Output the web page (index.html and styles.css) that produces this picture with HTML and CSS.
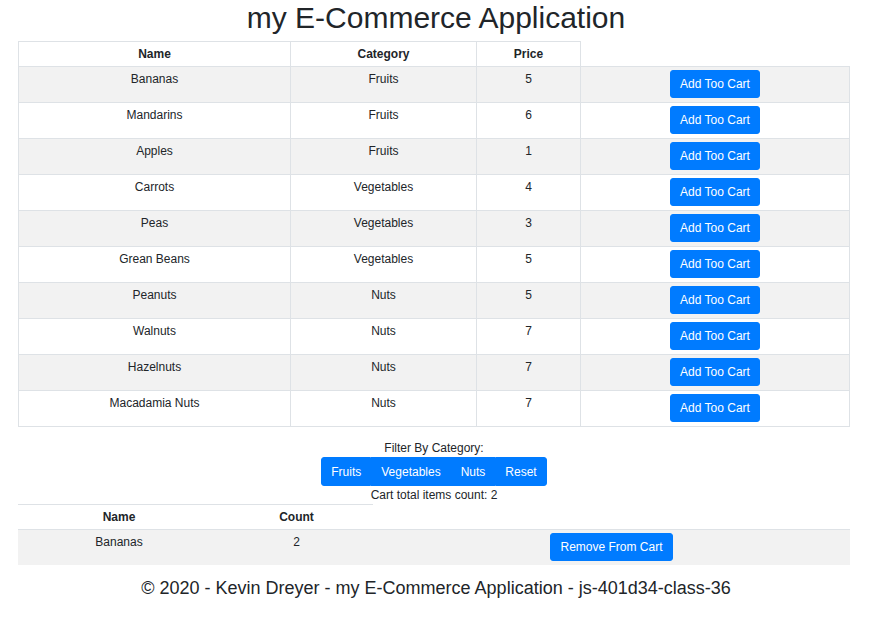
FILE: index.html
```html
<!DOCTYPE html>
<html lang="en">
<head>
<meta charset="utf-8">
<title>my E-Commerce Application</title>
<link rel="stylesheet" href="styles.css">
</head>
<body>
<div class="app">
  <h1 class="title">my E-Commerce Application</h1>
  <table class="tbl products">
    <colgroup>
      <col class="c-name"><col class="c-cat"><col class="c-price"><col>
    </colgroup>
    <thead>
      <tr><th>Name</th><th>Category</th><th>Price</th></tr>
    </thead>
    <tbody>
      <tr><td>Bananas</td><td>Fruits</td><td>5</td><td><button class="btn">Add Too Cart</button></td></tr>
      <tr><td>Mandarins</td><td>Fruits</td><td>6</td><td><button class="btn">Add Too Cart</button></td></tr>
      <tr><td>Apples</td><td>Fruits</td><td>1</td><td><button class="btn">Add Too Cart</button></td></tr>
      <tr><td>Carrots</td><td>Vegetables</td><td>4</td><td><button class="btn">Add Too Cart</button></td></tr>
      <tr><td>Peas</td><td>Vegetables</td><td>3</td><td><button class="btn">Add Too Cart</button></td></tr>
      <tr><td>Grean Beans</td><td>Vegetables</td><td>5</td><td><button class="btn">Add Too Cart</button></td></tr>
      <tr><td>Peanuts</td><td>Nuts</td><td>5</td><td><button class="btn">Add Too Cart</button></td></tr>
      <tr><td>Walnuts</td><td>Nuts</td><td>7</td><td><button class="btn">Add Too Cart</button></td></tr>
      <tr><td>Hazelnuts</td><td>Nuts</td><td>7</td><td><button class="btn">Add Too Cart</button></td></tr>
      <tr><td>Macadamia Nuts</td><td>Nuts</td><td>7</td><td><button class="btn">Add Too Cart</button></td></tr>
    </tbody>
  </table>

  <div class="filter">
    <div class="line">Filter By Category:</div>
    <div class="btn-group">
      <button class="btn">Fruits</button><button class="btn">Vegetables</button><button class="btn">Nuts</button><button class="btn">Reset</button>
    </div>
    <div class="line">Cart total items count: 2</div>
  </div>

  <table class="tbl cart">
    <colgroup>
      <col class="c-cname"><col class="c-count"><col>
    </colgroup>
    <thead>
      <tr><th>Name</th><th>Count</th></tr>
    </thead>
    <tbody>
      <tr><td>Bananas</td><td>2</td><td><button class="btn">Remove From Cart</button></td></tr>
    </tbody>
  </table>

  <h4 class="footer">© 2020 - Kevin Dreyer - my E-Commerce Application - js-401d34-class-36</h4>
</div>
</body>
</html>
```

FILE: styles.css
```css
* { box-sizing: border-box; }

html, body {
  margin: 0;
  padding: 0;
  background: #fff;
}

body {
  font-family: "Liberation Sans", Arial, Helvetica, sans-serif;
  font-size: 12px;
  line-height: 18px;
  color: #212529;
}

.app {
  padding: 0 22px 0 18px;
  text-align: center;
}

.title {
  margin: 0 0 5px;
  padding-left: 4px;
  font-size: 30px;
  line-height: 36px;
  font-weight: 400;
}

.tbl {
  width: 100%;
  border-collapse: collapse;
  table-layout: fixed;
  margin-bottom: 12px;
}

.tbl th,
.tbl td {
  padding: 3px 3.5px 4px;
  vertical-align: top;
  text-align: center;
  border-top: 1px solid #dee2e6;
}

.tbl th {
  font-weight: 700;
  padding: 3px 3.5px;
}

.tbl thead th {
  border-bottom: 1px solid #dee2e6;
}

.tbl tbody tr:nth-child(odd) {
  background: #f2f2f2;
}

.products th,
.products td {
  border: 1px solid #dee2e6;
}

.c-name { width: 272px; }
.c-cat { width: 186px; }
.c-price { width: 104px; }

.c-cname { width: 202px; }
.c-count { width: 153px; }

.btn {
  display: inline-block;
  font-family: inherit;
  font-size: 12px;
  line-height: 18px;
  height: 28px;
  padding: 4px 9px;
  border: 1px solid #007bff;
  border-radius: 3px;
  background: #007bff;
  color: #fff;
  cursor: pointer;
  vertical-align: middle;
}

.filter {
  display: flex;
  flex-direction: column;
  align-items: center;
}

.btn-group {
  display: flex;
  height: 29px;
}

.btn-group .btn {
  border-radius: 0;
  height: 29px;
  padding: 4.5px 9px;
}

.btn-group .btn:first-child {
  border-radius: 3px 0 0 3px;
}

.btn-group .btn:last-child {
  border-radius: 0 3px 3px 0;
}

.footer {
  margin: 0;
  padding-left: 4px;
  font-size: 18px;
  line-height: 22px;
  font-weight: 400;
}
```
